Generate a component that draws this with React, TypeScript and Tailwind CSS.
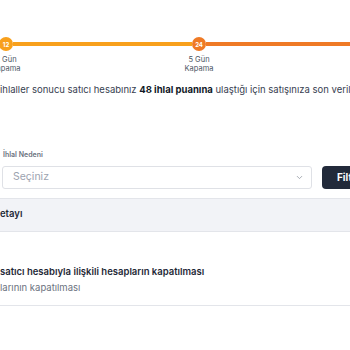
import { ChevronDown } from "lucide-react";

function Step({ value, color, label }: { value: string; color: string; label: [string, string] }) {
  return (
    <div className="flex w-[14px] flex-col items-center">
      <div
        className={`flex h-[14px] w-[14px] items-center justify-center rounded-full text-[6px] font-bold text-white ${color}`}
      >
        {value}
      </div>
      <div className="mt-[4px] whitespace-nowrap text-center text-[7.5px] leading-[9px] text-[#4b5563]">
        <div>{label[0]}</div>
        <div>{label[1]}</div>
      </div>
    </div>
  );
}

export default function App() {
  return (
    <div className="h-[350px] w-[350px] overflow-hidden bg-white font-['Inter',sans-serif] text-[#1f2937]">
      {/* ihlal puanı çizelgesi */}
      <div className="-ml-[1px] flex items-start pt-[37px]">
        <Step value="12" color="bg-[#f8a01c]" label={["2 Gün", "Kapama"]} />
        <div className="mt-[5px] h-[4px] w-[179px] bg-[#f8a01c]" />
        <Step value="24" color="bg-[#ef7a25]" label={["5 Gün", "Kapama"]} />
        <div className="mt-[5px] h-[4px] flex-1 bg-[#ef7a25]" />
      </div>

      <p className="mt-[10px] whitespace-nowrap text-[9.5px] leading-[14px] text-[#374151]">
        ihlaller sonucu satıcı hesabınız <b className="font-bold text-[#111827]">48 ihlal puanına</b> ulaştığı için
        satışınıza son verilmiştir.
      </p>

      {/* filtre */}
      <div className="mt-[53px] flex items-end gap-[10px] pl-[2px]">
        <div className="w-[310px] shrink-0">
          <div className="mb-[5px] pl-[1px] text-[7px] font-semibold text-[#6b7280]">İhlal Nedeni</div>
          <div className="flex h-[23px] items-center justify-between rounded-[3px] border border-[#dfe1e6] pl-[10px] pr-[7px]">
            <span className="text-[10.5px] text-[#9ca3af]">Seçiniz</span>
            <ChevronDown className="h-[9px] w-[9px] text-[#8b919b]" strokeWidth={2} />
          </div>
        </div>
        <button className="flex h-[23px] w-[70px] shrink-0 items-center rounded-[4px] bg-[#222a3a] pl-[15px] text-[10px] font-bold text-white">
          Filtrele
        </button>
      </div>

      <div className="mt-[9px] border-t border-[#e3e5ea]" />

      {/* tablo */}
      <div className="flex h-[33px] items-center border-b border-[#e3e5ea] bg-[#f2f3f7]">
        <span className="text-[9.5px] font-semibold text-[#1f2937]">etayı</span>
      </div>

      <div className="mt-[32px] border-b border-[#e3e5ea] pb-[9px]">
        <div className="whitespace-nowrap text-[9.5px] font-semibold leading-[16px] text-[#1f2937]">
          satıcı hesabıyla ilişkili hesapların kapatılması
        </div>
        <div className="whitespace-nowrap text-[9.5px] leading-[16px] text-[#6b7280]">larının kapatılması</div>
      </div>
    </div>
  );
}
